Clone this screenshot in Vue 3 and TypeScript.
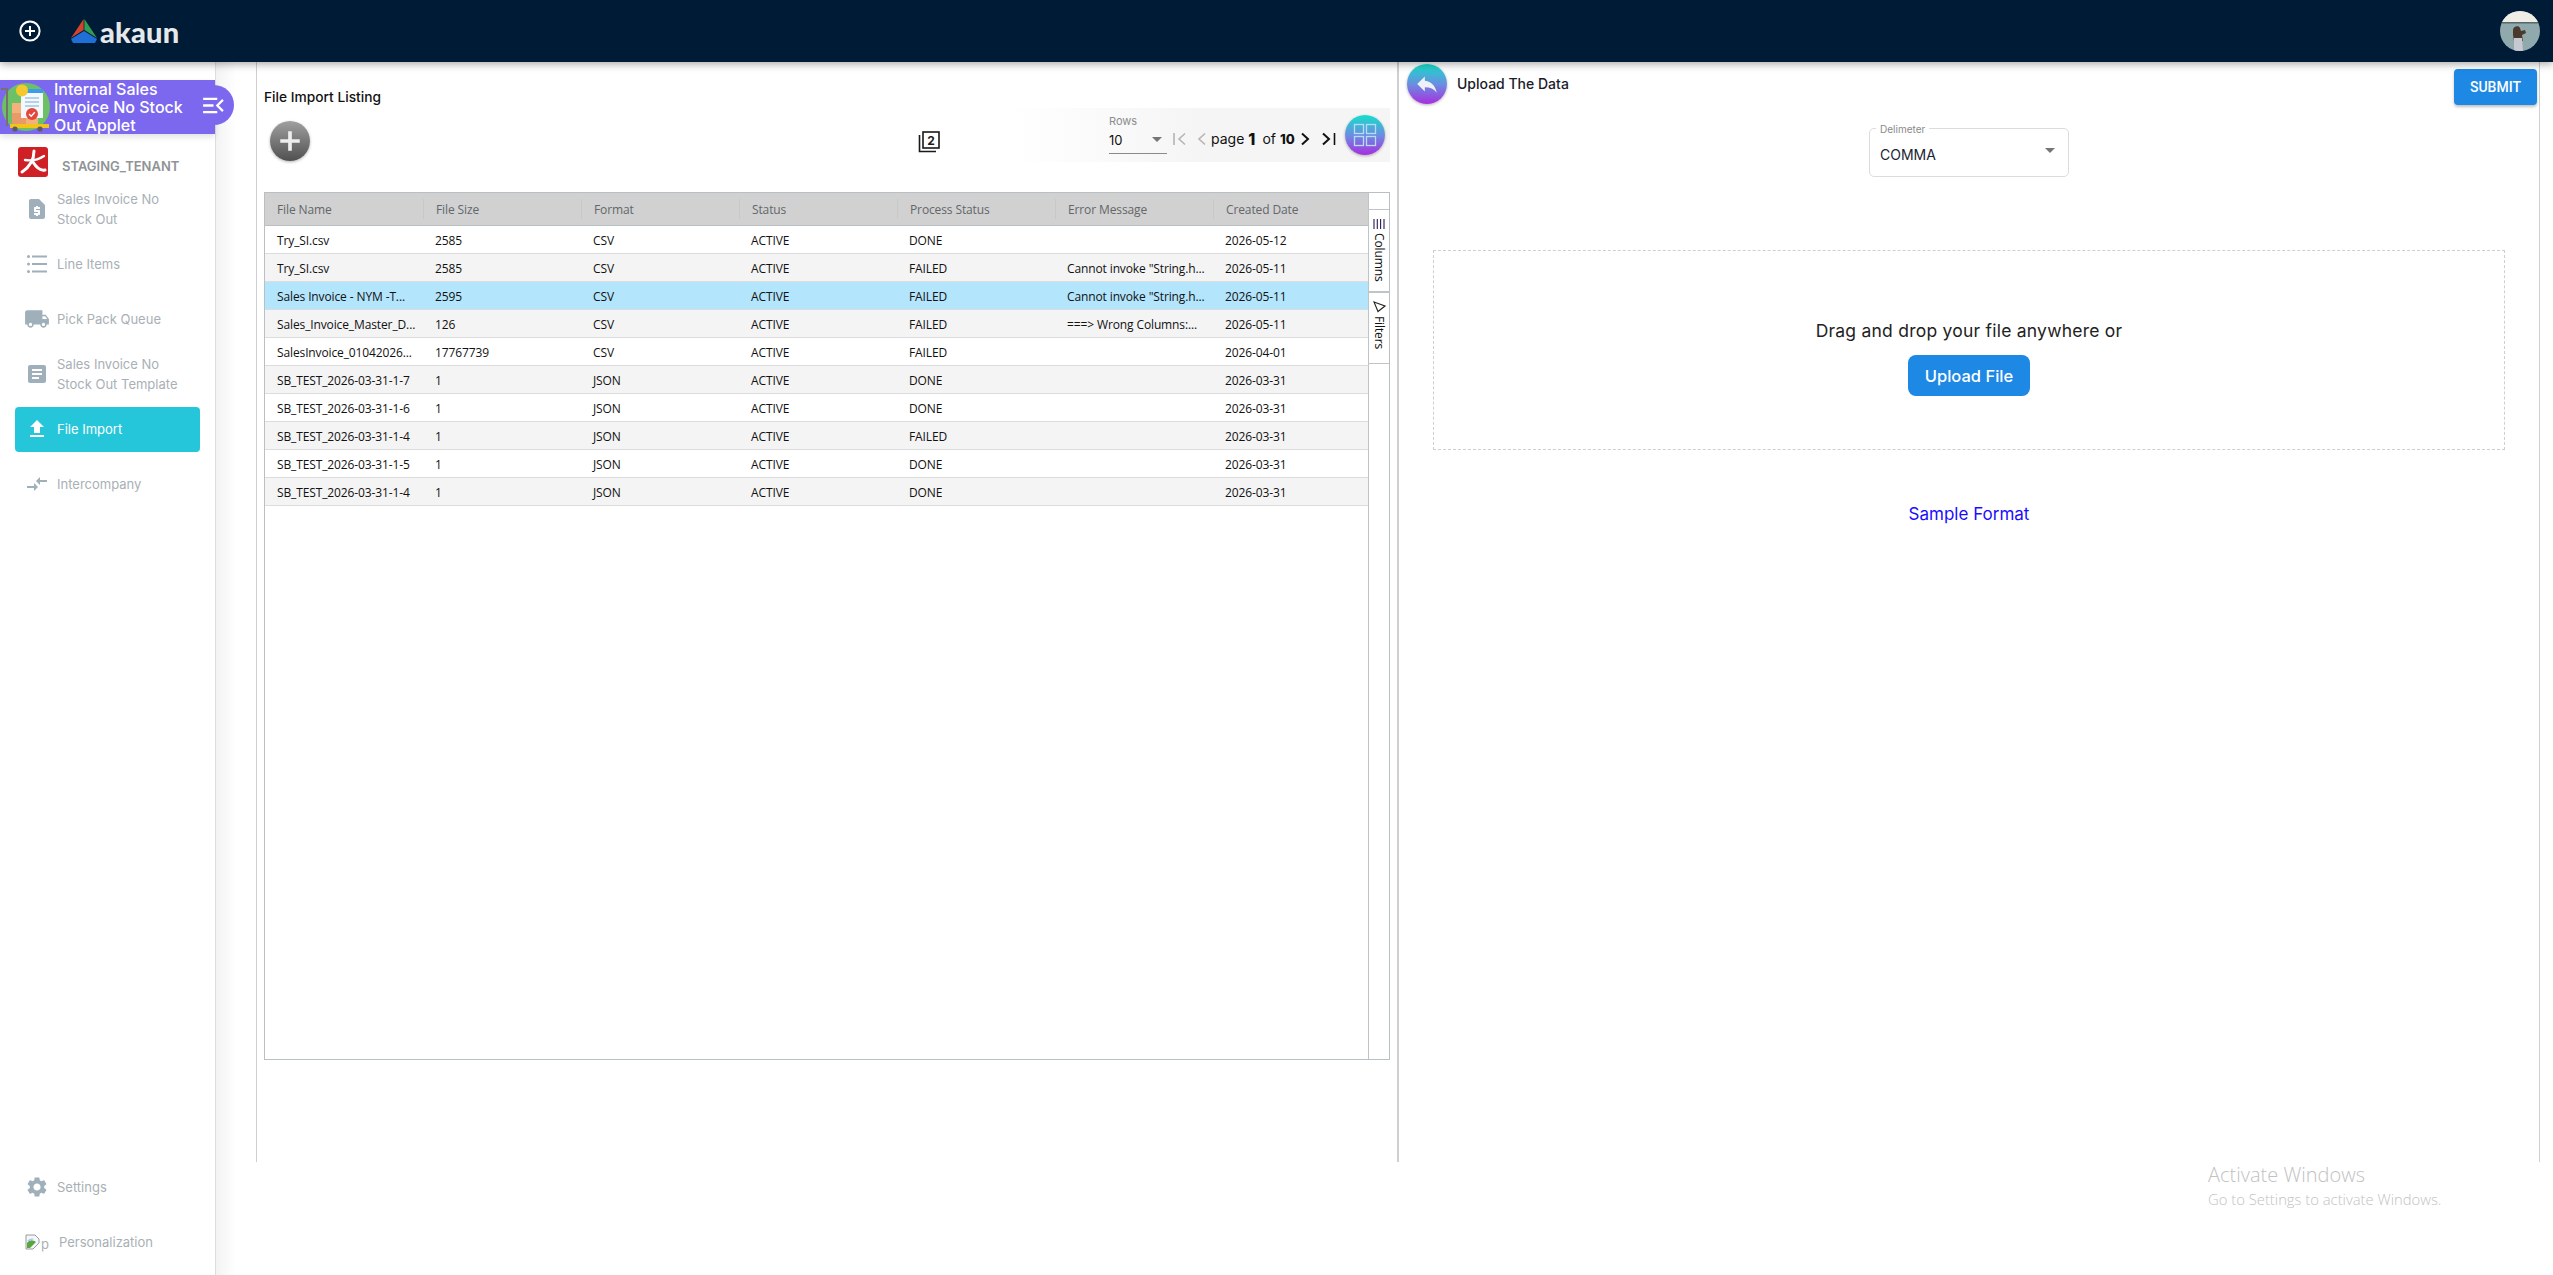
<template>
  <div class="app">
    <!-- top toolbar -->
    <header class="topbar">
      <svg class="add-icon" viewBox="0 0 24 24" width="24" height="24">
        <circle cx="12" cy="12" r="9.6" fill="none" stroke="#fff" stroke-width="2" />
        <path d="M12 7v10M7 12h10" stroke="#fff" stroke-width="2" />
      </svg>
      <svg class="logo-mark" viewBox="0 0 26 24" width="26" height="24">
        <path d="M12.6 0 L0 19 L12.6 11 Z" fill="#d2432c" />
        <path d="M13.4 0 L26 19 L13.4 11 Z" fill="#2f9e52" />
        <path d="M0 20 L13 12 L26 20 L24 24 L2 24 Z" fill="#1f6fd6" />
      </svg>
      <span class="logo-text">akaun</span>
      <svg class="avatar" viewBox="0 0 40 40" width="40" height="40">
        <defs>
          <clipPath id="avatar-clip"><circle cx="20" cy="20" r="20" /></clipPath>
        </defs>
        <g clip-path="url(#avatar-clip)">
          <rect width="40" height="40" fill="#8fa9ad" />
          <rect width="40" height="11" fill="#f0ede6" />
          <rect y="11" width="40" height="1.5" fill="#55696b" />
          <path d="M13 19c0-4 6-5 7-2l1 3 4-1 1 3-4 2 1 6h-9l-1-6z" fill="#4a3a2c" />
          <path d="M14 27h8l1 13h-9z" fill="#c7c8d2" />
        </g>
      </svg>
    </header>

    <div class="body">
      <!-- sidebar -->
      <aside class="sidebar">
        <div class="applet-head">
          <svg class="applet-icon" viewBox="0 0 50 50" width="50" height="50">
            <circle cx="25" cy="25" r="24" fill="#6cc066" />
            <rect x="11" y="21" width="26" height="21" fill="#f3b27c" />
            <rect x="11" y="31" width="14" height="11" fill="#e89a68" />
            <rect x="20" y="7" width="22" height="29" fill="#f4f8fb" />
            <rect x="20" y="7" width="22" height="4" fill="#3d9be9" />
            <path d="M24 16h14M24 20h14M24 24h14" stroke="#9fc5e6" stroke-width="1.4" />
            <circle cx="21" cy="8.5" r="6" fill="#f5c92e" />
            <circle cx="31" cy="32" r="6" fill="#e2483c" />
            <path d="M28 32l2.2 2.2 3.6-4" stroke="#fff" stroke-width="1.4" fill="none" />
            <path d="M0 7h6v37" stroke="#77736b" stroke-width="2" fill="none" />
            <rect x="9" y="42" width="39" height="4" fill="#f2c318" />
            <circle cx="14" cy="47" r="2.6" fill="#5c5c5c" />
            <circle cx="39" cy="47" r="2.6" fill="#5c5c5c" />
          </svg>
          <span class="applet-title">Internal Sales Invoice No Stock Out Applet</span>
          <span class="collapse-tab">
            <svg viewBox="0 0 24 18" width="23" height="17">
              <path d="M1 2h15M1 9h11M1 16h15" stroke="#fff" stroke-width="2.4" />
              <path d="M22 3l-6 6 6 6" stroke="#fff" stroke-width="2.4" fill="none" />
            </svg>
          </span>
        </div>

        <div class="tenant">
          <svg class="tenant-logo" viewBox="0 0 30 30" width="30" height="30">
            <rect width="30" height="30" rx="3" fill="#cf2026" />
            <g fill="none" stroke="#fff" stroke-linecap="round">
              <path d="M16 4c0 7-3 15-12 21" stroke-width="3" />
              <path d="M7 13c6 1 13 0 19-4" stroke-width="2.4" />
              <path d="M15 15c3 5 7 9 12 8" stroke-width="3" />
            </g>
          </svg>
          <span>STAGING_TENANT</span>
        </div>

        <nav class="nav">
          <a v-for="item in navItems" :key="item.label" class="nav-item" :class="{ active: item.active }">
            <span class="nav-icon">
              <svg viewBox="0 0 24 24" :width="item.size" :height="item.size"><path :d="item.icon" /></svg>
            </span>
            <span class="nav-label">{{ item.label }}</span>
          </a>
        </nav>

        <nav class="nav nav-bottom">
          <a class="nav-item">
            <span class="nav-icon">
              <svg viewBox="0 0 24 24" width="24" height="24"><path :d="gearPath" /></svg>
            </span>
            <span class="nav-label">Settings</span>
          </a>
          <a class="nav-item nav-personal">
            <span class="broken-img">
              <svg viewBox="0 0 16 16" width="16" height="16">
                <path d="M1 15V1h9l4 4v4l-6 6z" fill="#f4f7fb" stroke="#9a9a9a" stroke-width="1" />
                <path d="M2 9c3-4 6-3 9-1l-6 6H2z" fill="#5aa53c" />
                <path d="M2 7c2-2 4-3 7-2l-4 2z" fill="#a9c8ee" />
              </svg>
              <i>p</i>
            </span>
            <span class="nav-label">Personalization</span>
          </a>
        </nav>
      </aside>

      <main class="main">
        <!-- left: listing -->
        <section class="listing">
          <h2 class="listing-title">File Import Listing</h2>
          <div class="listing-tools">
            <button class="fab fab-grey">
              <svg viewBox="0 0 24 24" width="26" height="26">
                <path d="M12 3v18M3 12h18" stroke="#eee" stroke-width="3.4" />
              </svg>
            </button>
            <svg class="stack-icon" viewBox="0 0 22 22" width="22" height="22">
              <path d="M1.5 4v16.5H18" fill="none" stroke="#1a1a1a" stroke-width="1.6" />
              <rect x="5" y="1" width="16" height="16" fill="none" stroke="#1a1a1a" stroke-width="1.6" />
              <text x="13" y="13.5" text-anchor="middle" class="stack-num">2</text>
            </svg>
            <div class="pager">
              <label class="rows">
                <span class="rows-label">Rows</span>
                <span class="rows-select">10<i class="caret"></i></span>
              </label>
              <svg class="pg-first" viewBox="0 0 14 14" width="14" height="14">
                <path d="M1 1v12M12 1.5L6 7l6 5.5" fill="none" stroke="#b5b5b5" stroke-width="1.6" />
              </svg>
              <svg class="pg-prev" viewBox="0 0 9 14" width="9" height="14">
                <path d="M8 1.5L2 7l6 5.5" fill="none" stroke="#b5b5b5" stroke-width="1.6" />
              </svg>
              <span class="pg-text pg-page">page</span>
              <b class="pg-num">1</b>
              <span class="pg-text pg-of">of</span>
              <b class="pg-num pg-total">10</b>
              <svg class="pg-next" viewBox="0 0 9 14" width="9" height="14">
                <path d="M1 1.5L7 7l-6 5.5" fill="none" stroke="#111" stroke-width="2" />
              </svg>
              <svg class="pg-last" viewBox="0 0 14 14" width="14" height="14">
                <path d="M1 1.5L7 7l-6 5.5" fill="none" stroke="#111" stroke-width="2" />
                <path d="M12.5 1v12" stroke="#111" stroke-width="1.6" />
              </svg>
              <button class="fab fab-bright">
                <svg viewBox="0 0 24 24" width="24" height="24">
                  <g fill="none" stroke="#b7dcf5" stroke-width="1.3">
                    <rect x="1.5" y="1.5" width="9" height="9" />
                    <rect x="13.5" y="1.5" width="9" height="9" />
                    <rect x="1.5" y="13.5" width="9" height="9" />
                    <rect x="13.5" y="13.5" width="9" height="9" />
                  </g>
                </svg>
              </button>
            </div>
          </div>

          <div class="grid">
            <div class="grid-table">
              <div class="grid-head">
                <div v-for="col in columns" :key="col" class="head-cell">{{ col }}</div>
              </div>
              <div
                v-for="(row, i) in rows"
                :key="i"
                class="grid-row"
                :class="{ selected: i === 2, striped: i % 2 === 1 }"
              >
                <div v-for="(val, j) in row" :key="j" class="cell">{{ val }}</div>
              </div>
            </div>
            <div class="side-tabs">
              <div class="side-top"></div>
              <div class="side-tab tab-columns">
                <svg viewBox="0 0 12 12" width="12" height="12">
                  <path d="M1 1v10M4.3 1v10M7.6 1v10M11 1v10" stroke="#2b1a55" stroke-width="1.1" />
                </svg>
                <span>Columns</span>
              </div>
              <div class="side-tab tab-filters">
                <svg viewBox="0 0 13 12" width="13" height="12">
                  <path d="M1 1L12 5L5 10.5Z" fill="none" stroke="#222" stroke-width="1.1" />
                </svg>
                <span>Filters</span>
              </div>
            </div>
          </div>
        </section>

        <!-- right: upload -->
        <section class="upload">
          <div class="upload-head">
            <button class="fab fab-bright">
              <svg viewBox="0 0 24 24" width="26" height="26">
                <path d="M10 9V5l-7 7 7 7v-4.1c5 0 8.5 1.6 11 5.1-1-5-4-10-11-11z" fill="#eef2f7" />
              </svg>
            </button>
            <span class="upload-title">Upload The Data</span>
            <button class="submit">SUBMIT</button>
          </div>

          <div class="delimiter">
            <span class="delimiter-label">Delimeter</span>
            <span class="delimiter-value">COMMA</span>
            <i class="caret"></i>
          </div>

          <div class="dropzone">
            <p>Drag and drop your file anywhere or</p>
            <button class="upload-btn">Upload File</button>
          </div>

          <a class="sample-link">Sample Format</a>
        </section>
      </main>
    </div>

    <div class="watermark">
      <div class="wm-title">Activate Windows</div>
      <div class="wm-sub">Go to Settings to activate Windows.</div>
    </div>
  </div>
</template>

<script setup lang="ts">
interface NavItem {
  label: string
  icon: string
  size: number
  active?: boolean
}

const navItems: NavItem[] = [
  {
    label: 'Sales Invoice No Stock Out',
    size: 24,
    icon: 'M14 2H6c-1.1 0-1.99.9-1.99 2L4 20c0 1.1.89 2 1.99 2H18c1.1 0 2-.9 2-2V8l-6-6zm1 10h-4v1h3c.55 0 1 .45 1 1v3c0 .55-.45 1-1 1h-1v1h-2v-1H9v-2h4v-1h-3c-.55 0-1-.45-1-1v-3c0-.55.45-1 1-1h1V9h2v1h2v2z'
  },
  {
    label: 'Line Items',
    size: 24,
    icon: 'M2 4.5a1.5 1.5 0 1 0 3 0 1.5 1.5 0 1 0-3 0zM2 12a1.5 1.5 0 1 0 3 0 1.5 1.5 0 1 0-3 0zM2 19.5a1.5 1.5 0 1 0 3 0 1.5 1.5 0 1 0-3 0zM7 3.5h15v2H7zM7 11h15v2H7zM7 18.5h15v2H7z'
  },
  {
    label: 'Pick Pack Queue',
    size: 26,
    icon: 'M20 8h-3V4H3c-1.1 0-2 .9-2 2v11h2c0 1.66 1.34 3 3 3s3-1.34 3-3h6c0 1.66 1.34 3 3 3s3-1.34 3-3h2v-5l-3-4zM6 18.5c-.83 0-1.5-.67-1.5-1.5s.67-1.5 1.5-1.5 1.5.67 1.5 1.5-.67 1.5-1.5 1.5zm13.5-9l1.96 2.5H17V9.5h2.5zm-1.5 9c-.83 0-1.5-.67-1.5-1.5s.67-1.5 1.5-1.5 1.5.67 1.5 1.5-.67 1.5-1.5 1.5z'
  },
  {
    label: 'Sales Invoice No Stock Out Template',
    size: 24,
    icon: 'M19 3H5c-1.1 0-2 .9-2 2v14c0 1.1.9 2 2 2h14c1.1 0 2-.9 2-2V5c0-1.1-.9-2-2-2zm-5 14H7v-2h7v2zm3-4H7v-2h10v2zm0-4H7V7h10v2z'
  },
  {
    label: 'File Import',
    size: 24,
    active: true,
    icon: 'M9 16h6v-6h4l-7-7-7 7h4v6zm-4 2h14v2H5v-2z'
  },
  {
    label: 'Intercompany',
    size: 24,
    icon: 'M9.01 14H2v2h7.01v3L13 15l-3.99-4v3zm5.98-1v-3H22V8h-7.01V5L11 9l3.99 4z'
  }
]

const gearPath =
  'M19.14 12.94c.04-.3.06-.61.06-.94 0-.32-.02-.64-.07-.94l2.03-1.58c.18-.14.23-.41.12-.61l-1.92-3.32c-.12-.22-.37-.29-.59-.22l-2.39.96c-.5-.38-1.03-.7-1.62-.94l-.36-2.54c-.04-.24-.24-.41-.48-.41h-3.84c-.24 0-.43.17-.47.41l-.36 2.54c-.59.24-1.13.57-1.62.94l-2.39-.96c-.22-.08-.47 0-.59.22L2.74 8.87c-.12.21-.08.47.12.61l2.03 1.58c-.05.3-.09.63-.09.94s.02.64.07.94l-2.03 1.58c-.18.14-.23.41-.12.61l1.92 3.32c.12.22.37.29.59.22l2.39-.96c.5.38 1.03.7 1.62.94l.36 2.54c.05.24.24.41.48.41h3.84c.24 0 .44-.17.47-.41l.36-2.54c.59-.24 1.13-.56 1.62-.94l2.39.96c.22.08.47 0 .59-.22l1.92-3.32c.12-.22.07-.47-.12-.61l-2.01-1.58zM12 15.6c-1.98 0-3.6-1.62-3.6-3.6s1.62-3.6 3.6-3.6 3.6 1.62 3.6 3.6-1.62 3.6-3.6 3.6z'

const columns = ['File Name', 'File Size', 'Format', 'Status', 'Process Status', 'Error Message', 'Created Date']

const cannotInvoke = 'Cannot invoke "String.h...'

const rows: string[][] = [
  ['Try_SI.csv', '2585', 'CSV', 'ACTIVE', 'DONE', '', '2026-05-12'],
  ['Try_SI.csv', '2585', 'CSV', 'ACTIVE', 'FAILED', cannotInvoke, '2026-05-11'],
  ['Sales Invoice - NYM -T...', '2595', 'CSV', 'ACTIVE', 'FAILED', cannotInvoke, '2026-05-11'],
  ['Sales_Invoice_Master_D...', '126', 'CSV', 'ACTIVE', 'FAILED', '===> Wrong Columns:...', '2026-05-11'],
  ['SalesInvoice_01042026...', '17767739', 'CSV', 'ACTIVE', 'FAILED', '', '2026-04-01'],
  ['SB_TEST_2026-03-31-1-7', '1', 'JSON', 'ACTIVE', 'DONE', '', '2026-03-31'],
  ['SB_TEST_2026-03-31-1-6', '1', 'JSON', 'ACTIVE', 'DONE', '', '2026-03-31'],
  ['SB_TEST_2026-03-31-1-4', '1', 'JSON', 'ACTIVE', 'FAILED', '', '2026-03-31'],
  ['SB_TEST_2026-03-31-1-5', '1', 'JSON', 'ACTIVE', 'DONE', '', '2026-03-31'],
  ['SB_TEST_2026-03-31-1-4', '1', 'JSON', 'ACTIVE', 'DONE', '', '2026-03-31']
]
</script>

<style>
html,
body {
  margin: 0;
  background: #fff;
  overflow: hidden;
}
</style>

<style scoped>
.app {
  position: relative;
  width: 2553px;
  height: 1275px;
  display: flex;
  flex-direction: column;
  font-family: Inter, 'Noto Sans', sans-serif;
  color: #111;
  background: #fff;
}

button {
  border: none;
  cursor: pointer;
  font-family: inherit;
  padding: 0;
}

/* top toolbar */
.topbar {
  position: relative;
  z-index: 3;
  flex: 0 0 62px;
  display: flex;
  align-items: center;
  background: #001b36;
  box-shadow: 0 2px 8px rgba(0, 0, 0, 0.35);
  padding: 0 13px 0 18px;
}

.logo-mark {
  margin-left: 29px;
}

.logo-text {
  margin-left: 3px;
  font-family: Lato, sans-serif;
  font-weight: 900;
  font-size: 29px;
  color: #e6e8ea;
  letter-spacing: 0.2px;
}

.avatar {
  margin-left: auto;
}

/* layout */
.body {
  flex: 1;
  display: flex;
  min-height: 0;
}

.sidebar {
  position: relative;
  z-index: 2;
  flex: 0 0 216px;
  box-sizing: border-box;
  display: flex;
  flex-direction: column;
  padding-top: 18px;
  border-right: 1px solid #dedede;
  background: #fff;
}

.applet-head {
  position: relative;
  height: 54px;
  display: flex;
  align-items: center;
  background: #7b68ee;
  box-shadow: 0 3px 6px rgba(0, 0, 0, 0.12);
}

.applet-icon {
  flex: none;
  margin-left: 1px;
}

.applet-title {
  margin-left: 3px;
  width: 140px;
  font-size: 16px;
  line-height: 18px;
  font-weight: 500;
  color: #fff;
}

.collapse-tab {
  position: absolute;
  top: 5px;
  right: -19px;
  width: 39px;
  height: 40px;
  display: flex;
  align-items: center;
  justify-content: center;
  padding-right: 3px;
  box-sizing: border-box;
  background: #7b68ee;
  border-radius: 0 20px 20px 0;
}

.tenant {
  display: flex;
  align-items: center;
  padding: 13px 0 0 18px;
  font-size: 13px;
  font-weight: 600;
  color: #8f9396;
}

.tenant span {
  margin: 7px 0 0 14px;
}

.nav {
  display: flex;
  flex-direction: column;
  gap: 10px;
  margin-top: 9.5px;
}

.nav-bottom {
  margin-top: auto;
  padding-bottom: 11px;
}

.nav-item {
  display: flex;
  align-items: center;
  height: 45px;
  margin: 0 15px;
  padding-left: 10px;
  border-radius: 4px;
  font-size: 13px;
  line-height: 20px;
  color: #a9b0b5;
}

.nav-icon {
  flex: 0 0 24px;
  width: 24px;
  min-width: 0;
  display: flex;
  justify-content: center;
  margin-right: 8px;
  fill: #9fb0bb;
}

.nav-icon svg {
  flex: none;
}

.nav-label {
  width: 132px;
}

.nav-item.active {
  background: #26c6da;
  color: #fff;
}

.nav-item.active .nav-icon {
  fill: #fff;
}

.broken-img {
  flex: 0 0 24px;
  display: flex;
  align-items: flex-start;
  margin-right: 10px;
  height: 16px;
}

.broken-img i {
  font-style: normal;
  font-size: 13px;
  line-height: 20px;
}

/* panels */
.main {
  flex: 1;
  height: 1100px;
  display: flex;
  margin-left: 40px;
  position: relative;
}

.main::before {
  content: '';
  position: absolute;
  top: 0;
  bottom: -113px;
  left: -40px;
  width: 20px;
  background: linear-gradient(90deg, #f3f3f3, #fff);
}

.listing {
  flex: 0 0 1143px;
  box-sizing: border-box;
  padding: 22px 7px 0 7px;
  border-left: 1px solid #cfcfcf;
  border-right: 2px solid #cfcfcf;
}

.listing-title {
  margin: 0;
  height: 24px;
  line-height: 26px;
  font-size: 13.75px;
  font-weight: 500;
  color: #111;
}

.listing-tools {
  display: flex;
  align-items: flex-start;
  height: 54px;
}

.fab {
  flex: none;
  width: 40px;
  height: 40px;
  border-radius: 50%;
  display: flex;
  align-items: center;
  justify-content: center;
  box-shadow: 0 1px 3px rgba(0, 0, 0, 0.3);
}

.fab-grey {
  margin: 13px 0 0 6px;
  background: linear-gradient(180deg, #a0a0a0, #505050);
}

.fab-bright {
  background: linear-gradient(180deg, #14dfca 0%, #6a8fe0 50%, #a82fe0 100%);
}

.stack-icon {
  margin: 23px 69px 0 auto;
}

.stack-num {
  font-size: 12px;
  font-weight: 700;
  fill: #1a1a1a;
}

.pager {
  width: 381px;
  height: 54px;
  box-sizing: border-box;
  padding-left: 100px;
  display: flex;
  align-items: center;
  background: linear-gradient(90deg, rgba(245, 245, 245, 0), #f5f5f5 50%);
  font-size: 14px;
}

.rows {
  display: flex;
  flex-direction: column;
  width: 58px;
  margin-top: -2px;
}

.rows-label {
  font-size: 11px;
  line-height: 14px;
  color: #8c8c8c;
}

.rows-select {
  position: relative;
  height: 26px;
  line-height: 24px;
  font-size: 13px;
  border-bottom: 1px solid #8a8a8a;
  box-sizing: border-box;
}

.caret {
  position: absolute;
  right: 5px;
  top: 9px;
  width: 0;
  height: 0;
  border-left: 5px solid transparent;
  border-right: 5px solid transparent;
  border-top: 5px solid #757575;
}

.pg-first {
  margin: 7px 0 0 6px;
}

.pg-prev {
  margin: 7px 0 0 10px;
}

.pg-text {
  margin: 7px 0 0 3px;
  font-size: 14px;
  color: #111;
}

.pg-page {
  margin-left: 5px;
}

.pg-of {
  margin-left: 7px;
}

.pg-num {
  margin: 7px 0 0 4px;
  font-size: 16px;
  font-weight: 800;
}

.pg-total {
  margin-left: 4px;
  font-size: 13px;
}

.pg-next {
  margin: 7px 0 0 6px;
}

.pg-last {
  margin: 7px 0 0 12px;
}

.pager .fab {
  margin-left: 9px;
}

/* data grid */
.grid {
  margin-top: 30px;
  height: 868px;
  display: flex;
  box-sizing: border-box;
  border: 1px solid #b9c0c4;
  font-family: 'Open Sans', 'Noto Sans', sans-serif;
  font-size: 12px;
  letter-spacing: -0.12px;
}

.grid-table {
  flex: 1;
  min-width: 0;
}

.grid-head,
.grid-row {
  display: grid;
  grid-template-columns: repeat(6, 158px) 1fr;
  box-sizing: border-box;
  align-items: center;
}

.grid-head {
  height: 33px;
  background: #d1d1d1;
  border-bottom: 1px solid #b9c0c4;
}

.head-cell {
  padding: 2px 0 0 12px;
  height: 18px;
  line-height: 18px;
  font-weight: 500;
  color: #63676a;
  border-left: 1px solid #c8c8c8;
}

.head-cell:first-child {
  border-left: none;
}

.grid-row {
  height: 28px;
  background: #fff;
  border-bottom: 1px solid #dcdcdc;
}

.grid-row.striped {
  background: #f4f4f4;
}

.grid-row.selected {
  background: #b3e5fc;
}

.cell {
  padding: 2px 0 0 12px;
  white-space: nowrap;
  color: #111;
}

.side-tabs {
  flex: 0 0 20px;
  display: flex;
  flex-direction: column;
  border-left: 1px solid #bfc4c7;
}

.side-top {
  height: 16px;
  border-bottom: 1px solid #bfc4c7;
}

.side-tab {
  display: flex;
  flex-direction: column;
  align-items: center;
  padding-top: 8px;
  gap: 3px;
  box-sizing: border-box;
  border-bottom: 1px solid #bfc4c7;
  color: #111;
  font-size: 12px;
}

.side-tab span {
  writing-mode: vertical-rl;
}

.tab-columns {
  height: 83px;
  border-bottom-width: 2px;
}

.tab-filters {
  height: 71px;
}

/* upload panel */
.upload {
  flex: 0 0 1141px;
  box-sizing: border-box;
  display: flex;
  flex-direction: column;
  align-items: center;
  border-right: 1px solid #cfcfcf;
}

.upload-head {
  align-self: stretch;
  display: flex;
  align-items: center;
  height: 43px;
  padding: 0 2px 0 8px;
}

.upload-title {
  margin-left: 10px;
  font-size: 14px;
  font-weight: 500;
  color: #1b1b2a;
}

.submit {
  margin: 7px 0 0 auto;
  width: 83px;
  height: 36px;
  align-self: flex-start;
  border-radius: 4px;
  background: #1e88e5;
  color: #fff;
  font-family: Roboto, sans-serif;
  font-size: 14px;
  font-weight: 500;
  box-shadow: 0 2px 3px rgba(0, 0, 0, 0.25);
}

.delimiter {
  position: relative;
  margin-top: 23px;
  width: 200px;
  height: 49px;
  box-sizing: border-box;
  padding: 15px 10px;
  border: 1px solid #dcdcdc;
  border-radius: 5px;
}

.delimiter-label {
  position: absolute;
  top: -6px;
  left: 6px;
  padding: 0 4px;
  background: #fff;
  font-size: 10px;
  line-height: 12px;
  color: #8a8a8a;
}

.delimiter-value {
  font-size: 14px;
  color: #1b2433;
}

.delimiter .caret {
  top: 19px;
  right: 13px;
}

.dropzone {
  margin-top: 73px;
  width: 1072px;
  height: 200px;
  box-sizing: border-box;
  border: 1px dashed #cfcfcf;
  display: flex;
  flex-direction: column;
  align-items: center;
  padding-top: 68px;
}

.dropzone p {
  margin: 0 0 12px;
  font-size: 17.5px;
  letter-spacing: 0.23px;
  line-height: 24px;
  color: #222;
}

.upload-btn {
  width: 122px;
  height: 41px;
  border-radius: 8px;
  background: #1e88e5;
  color: #fff;
  font-size: 16.5px;
  font-weight: 500;
}

.sample-link {
  margin-top: 54px;
  font-size: 17px;
  line-height: 20px;
  color: #1a0dff;
}

.watermark {
  position: absolute;
  left: 2208px;
  top: 1161px;
  font-family: 'Open Sans', sans-serif;
  font-weight: 300;
  color: #c2c2c2;
}

.wm-title {
  font-size: 20px;
  line-height: 28px;
}

.wm-sub {
  font-size: 14.8px;
  line-height: 20px;
}
</style>
